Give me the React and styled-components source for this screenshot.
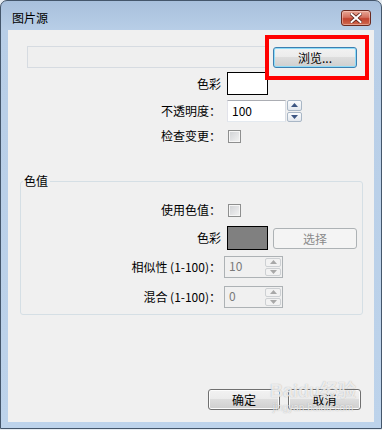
import React from "react";
import styled, { createGlobalStyle } from "styled-components";

const GlobalStyle = createGlobalStyle`
  html, body {
    margin: 0;
    padding: 0;
    background: #e6ecf2;
  }
  body {
    font-family: "Noto Sans CJK SC", "Noto Sans", sans-serif;
    font-size: 12px;
    color: #000;
  }
  * {
    box-sizing: border-box;
  }
`;

const Window = styled.div`
  width: 382px;
  height: 429px;
  border: 1px solid #44566b;
  border-radius: 7px 7px 0 0;
  background: linear-gradient(to bottom, #a8c0dc 0px, #b8cee7 29px, #bdd3eb 100%);
  padding: 0 7px 6px;
  display: flex;
  flex-direction: column;
`;

const TitleBar = styled.div`
  height: 29px;
  display: flex;
  align-items: flex-end;
  justify-content: space-between;
  padding: 0 3px 4px 4px;
`;

const Title = styled.div`
  font-size: 12px;
  line-height: 16px;
  color: #000;
`;

const CloseButton = styled.div`
  width: 30px;
  height: 16px;
  border: 1px solid #6b2a20;
  border-radius: 3px;
  background: linear-gradient(to bottom, #e8a796 0%, #d4715f 45%, #c1432f 55%, #cf6a50 100%);
  box-shadow: inset 0 0 0 1px rgba(255, 220, 210, 0.45);
  display: flex;
  align-items: center;
  justify-content: center;
`;

const Client = styled.div`
  flex: 1;
  background: #f0f0f0;
  display: flex;
  flex-direction: column;
  padding-top: 16px;
  position: relative;
`;

const PathRow = styled.div`
  display: flex;
  align-items: center;
  gap: 5px;
  padding-left: 19px;
  height: 22px;
`;

const PathInput = styled.div`
  width: 241px;
  height: 22px;
  border: 1px solid #d6dbe1;
  background: #efefef;
`;

const Highlight = styled.div`
  position: relative;
`;

const RedFrame = styled.div`
  position: absolute;
  left: -8px;
  top: -12px;
  right: -12px;
  bottom: -12px;
  border: 4px solid #ff0000;
  pointer-events: none;
`;

const Button = styled.div`
  width: ${(p) => p.$w || 84}px;
  height: 21px;
  border: 1px solid ${(p) => (p.$focused ? "#3c7fb1" : p.$disabled ? "#adb2b5" : "#707070")};
  border-radius: 3px;
  background: ${(p) =>
    p.$disabled
      ? "#f4f4f4"
      : "linear-gradient(to bottom, #f2f2f2 0%, #ebebeb 50%, #dddddd 50%, #cfcfcf 100%)"};
  box-shadow: ${(p) =>
    p.$focused ? "inset 0 0 0 1px #8fdcf8" : p.$disabled ? "none" : "inset 0 0 0 1px #fcfcfc"};
  color: ${(p) => (p.$disabled ? "#8a8a8a" : "#000")};
  font-size: 12px;
  line-height: 19px;
  text-align: center;
`;

const FormRow = styled.div`
  display: grid;
  grid-template-columns: ${(p) => p.$label}px auto;
  column-gap: 6px;
  align-items: center;
  margin-top: ${(p) => p.$top}px;
`;

const Label = styled.div`
  text-align: right;
  font-size: 12px;
  line-height: 16px;
  white-space: nowrap;
`;

const Controls = styled.div`
  display: flex;
  align-items: center;
  gap: 5px;
`;

const Swatch = styled.div`
  width: 41px;
  height: ${(p) => p.$h}px;
  border: 1px solid #000;
  background: ${(p) => p.$color};
`;

const SpinWrap = styled.div`
  display: flex;
  gap: 1px;
`;

const NumberField = styled.div`
  width: 59px;
  height: 22px;
  border: 1px solid;
  border-color: #abadb3 #dbdfe6 #e3e9ef #e2e3ea;
  background: #fff;
  padding-left: 4px;
  font-size: 12px;
  line-height: 20px;
  color: #000;
`;

const SpinColumn = styled.div`
  display: flex;
  flex-direction: column;
  gap: 1px;
  width: ${(p) => p.$w}px;
`;

const SpinButton = styled.div`
  flex: 1;
  border: 1px solid ${(p) => (p.$disabled ? "#cdd0d3" : "#a9b7c6")};
  border-radius: 2px;
  background: ${(p) =>
    p.$disabled ? "#f2f2f2" : "linear-gradient(to bottom, #fbfcfd, #e3e8ee)"};
  display: flex;
  align-items: center;
  justify-content: center;
`;

const DisabledSpin = styled.div`
  width: 59px;
  height: 22px;
  margin-left: -3px;
  border: 1px solid #adb2b5;
  background: #f0f0f0;
  display: flex;
  padding: 1px;
`;

const DisabledValue = styled.div`
  flex: 1;
  padding-left: 3px;
  color: #7a7a7a;
  font-size: 12px;
  line-height: 16px;
`;

const CheckBox = styled.div`
  width: 13px;
  height: 13px;
  margin-left: 1px;
  border: 1px solid #8e8f8f;
  background: linear-gradient(135deg, #cfd1d4 0%, #f4f4f4 100%);
  box-shadow: inset 0 0 0 1px #f6f6f6;
`;

const Group = styled.div`
  position: relative;
  margin: 37px 11px 0 12px;
  height: 134px;
  border: 1px solid #d5dfe5;
  border-radius: 3px;
  padding-top: 20px;
`;

const Legend = styled.div`
  position: absolute;
  left: 2px;
  top: -8px;
  padding: 0 2px 0 1px;
  background: #f0f0f0;
  font-size: 12px;
  line-height: 14px;
`;

const Footer = styled.div`
  margin-top: auto;
  display: flex;
  justify-content: flex-end;
  gap: 8px;
  padding: 0 13px 12px 0;
`;

const Watermark = styled.div`
  position: absolute;
  left: 262px;
  top: 350px;
  display: flex;
  flex-direction: column;
  align-items: center;
  pointer-events: none;
  color: rgba(255, 255, 255, 0.75);
  text-shadow: 0 0 1px rgba(120, 120, 120, 0.6);
`;

const MarkMain = styled.div`
  font-family: "Liberation Sans", "Noto Sans CJK SC", sans-serif;
  font-size: 18px;
  font-weight: bold;
  line-height: 22px;
`;

const MarkSub = styled.div`
  font-family: "Liberation Sans", sans-serif;
  font-size: 10px;
  line-height: 12px;
`;

const Arrow = ({ up, disabled }) => (
  <svg width="7" height="4" viewBox="0 0 7 4">
    <polygon
      points={up ? "3.5,0 7,4 0,4" : "0,0 7,0 3.5,4"}
      fill={disabled ? "#a8a8a8" : "#3d5682"}
    />
  </svg>
);

const CloseGlyph = () => (
  <svg width="12" height="10" viewBox="0 0 12 10">
    <path
      d="M1.5 1 L10.5 9 M10.5 1 L1.5 9"
      stroke="#5a2018"
      strokeWidth="3.6"
      strokeLinecap="square"
    />
    <path
      d="M1.5 1 L10.5 9 M10.5 1 L1.5 9"
      stroke="#ffffff"
      strokeWidth="2"
      strokeLinecap="square"
    />
  </svg>
);

export default function App() {
  return (
    <>
      <GlobalStyle />
      <Window>
        <TitleBar>
          <Title>图片源</Title>
          <CloseButton>
            <CloseGlyph />
          </CloseButton>
        </TitleBar>
        <Client>
          <PathRow>
            <PathInput />
            <Highlight>
              <Button $focused>浏览...</Button>
              <RedFrame />
            </Highlight>
          </PathRow>

          <FormRow $label={213} $top={4}>
            <Label>色彩</Label>
            <Controls>
              <Swatch $color="#ffffff" $h={23} />
            </Controls>
          </FormRow>

          <FormRow $label={213} $top={5}>
            <Label>不透明度：</Label>
            <SpinWrap>
              <NumberField>100</NumberField>
              <SpinColumn $w={15}>
                <SpinButton>
                  <Arrow up />
                </SpinButton>
                <SpinButton>
                  <Arrow />
                </SpinButton>
              </SpinColumn>
            </SpinWrap>
          </FormRow>

          <FormRow $label={213} $top={6}>
            <Label>检查变更：</Label>
            <Controls>
              <CheckBox />
            </Controls>
          </FormRow>

          <Group>
            <Legend>色值</Legend>

            <FormRow $label={200} $top={0}>
              <Label>使用色值：</Label>
              <Controls>
                <CheckBox />
              </Controls>
            </FormRow>

            <FormRow $label={200} $top={8}>
              <Label>色彩</Label>
              <Controls>
                <Swatch $color="#808080" $h={24} />
                <Button $disabled>选择</Button>
              </Controls>
            </FormRow>

            <FormRow $label={200} $top={6}>
              <Label>相似性 (1-100)：</Label>
              <DisabledSpin>
                <DisabledValue>10</DisabledValue>
                <SpinColumn $w={16}>
                  <SpinButton $disabled>
                    <Arrow up disabled />
                  </SpinButton>
                  <SpinButton $disabled>
                    <Arrow disabled />
                  </SpinButton>
                </SpinColumn>
              </DisabledSpin>
            </FormRow>

            <FormRow $label={200} $top={8}>
              <Label>混合 (1-100)：</Label>
              <DisabledSpin>
                <DisabledValue>0</DisabledValue>
                <SpinColumn $w={16}>
                  <SpinButton $disabled>
                    <Arrow up disabled />
                  </SpinButton>
                  <SpinButton $disabled>
                    <Arrow disabled />
                  </SpinButton>
                </SpinColumn>
              </DisabledSpin>
            </FormRow>
          </Group>

          <Footer>
            <Button $w={72}>确定</Button>
            <Button $w={73}>取消</Button>
          </Footer>

          <Watermark>
            <MarkMain>Baidu经验</MarkMain>
            <MarkSub>jingyan.baidu.com</MarkSub>
          </Watermark>
        </Client>
      </Window>
    </>
  );
}
